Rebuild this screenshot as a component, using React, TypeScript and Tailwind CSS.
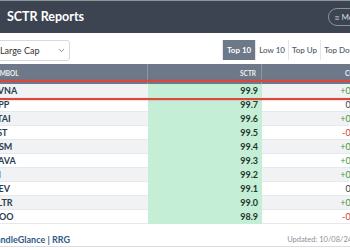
import React from 'react';
import { TrendingUp, ChevronDown } from 'lucide-react';

// top 10 large cap SCTR rows
const rows = [
  { sym: 'AVNA', sctr: '99.9', chg: '+0.3' },
  { sym: 'APP', sctr: '99.7', chg: '0.0' },
  { sym: 'STAI', sctr: '99.6', chg: '+0.1' },
  { sym: 'EST', sctr: '99.5', chg: '-0.2' },
  { sym: 'NSM', sctr: '99.4', chg: '+0.4' },
  { sym: 'CAVA', sctr: '99.3', chg: '+0.2' },
  { sym: 'VI', sctr: '99.2', chg: '+0.1' },
  { sym: 'GEV', sctr: '99.1', chg: '0.0' },
  { sym: 'PLTR', sctr: '99.0', chg: '+0.3' },
  { sym: 'HOO', sctr: '98.9', chg: '-0.1' },
];

const tabs = ['Top 10', 'Low 10', 'Top Up', 'Top Down'];

const chgColor = (c: string) =>
  c.startsWith('+') ? 'text-[#3b9a4f]' : c.startsWith('-') ? 'text-[#d23b3b]' : 'text-[#2d3e50]';

const App = () => {
  return (
    <div className="relative w-[350px] h-[250px] overflow-hidden bg-white font-['Lato','Liberation_Sans',sans-serif]">
      <div className="w-[420px] -ml-[16px] flex flex-col">
        {/* title bar */}
        <header className="h-[33px] bg-[#3d4451] border-t border-[#8e949c] flex items-center pr-[36px]">
          <TrendingUp className="-ml-[7px] w-[14px] h-[14px] text-white shrink-0" strokeWidth={2.5} />
          <h1 className="ml-[16px] text-[12.5px] font-bold text-white leading-none">SCTR Reports</h1>
          <button className="ml-auto h-[18px] px-[5px] rounded-full border border-[#8c929b] flex items-center gap-[2px] text-[8px] text-[#d9dce1]">
            <span className="text-[9px] leading-none">≡</span>
            <span>Menu</span>
          </button>
        </header>

        {/* controls */}
        <div className="mt-[7px] flex items-start">
          <div className="ml-[8px] w-[78px] h-[21px] border border-[#d6dae0] rounded-[3px] flex items-center justify-between pl-[7px] pr-[3px] text-[9px] text-[#333]">
            <span>Large Cap</span>
            <ChevronDown className="w-[9px] h-[9px] text-[#666]" strokeWidth={2} />
          </div>
          <div className="ml-[152px] flex h-[20px] text-[8px] whitespace-nowrap">
            {tabs.map((t, i) => (
              <div
                key={t}
                className={`flex items-center border-l border-[#e3e6ea] ${
                  i === 0 ? 'px-[4px] bg-[#6d7888] text-white font-bold' : 'px-[3px] text-[#4f5764] font-medium'
                }`}
              >
                {t}
              </div>
            ))}
          </div>
        </div>

        {/* table */}
        <div className="mt-[3px] text-[9px]">
          <div className="grid grid-cols-[164px_114px_142px] h-[20px] bg-[#6d7888] text-[6.5px] font-bold uppercase text-[#eef0f3]">
            <div className="flex items-center pl-[8px] border-r border-[#8d97a5]">Symbol</div>
            <div className="flex items-center justify-end pr-[5px] border-r border-[#8d97a5]">SCTR</div>
            <div className="flex items-center justify-end pr-[45px]">Chg</div>
          </div>
          {rows.map((r, i) => (
            <div
              key={r.sym}
              className={`grid grid-cols-[164px_114px_142px] h-[14px] border-b border-[#e6e8eb] ${
                i % 2 === 0 ? 'bg-[#f1f2f4]' : 'bg-white'
              }`}
            >
              <div className="flex items-center pl-[8px] font-bold text-[#2d3e50]">{r.sym}</div>
              <div className="flex items-center justify-end pr-[4px] bg-[#c4eed5] font-bold text-[#24362c]">{r.sctr}</div>
              <div className={`flex items-center justify-end pr-[46px] ${chgColor(r.chg)}`}>{r.chg}</div>
            </div>
          ))}
        </div>

        {/* footer */}
        <div className="h-[23px] pt-[10px] flex items-start border-b border-[#d9dce1]">
          <span className="ml-[6px] text-[9px] font-bold text-[#2f5a86] leading-[12px]">CandleGlance | RRG</span>
          <span className="ml-auto mr-[20px] text-[7.5px] text-[#8a9099] leading-[12px]">Updated: 10/08/24 16:05 ET</span>
        </div>
      </div>

      {/* highlight annotation over first row */}
      <div className="absolute left-[-10px] top-[80px] w-[370px] h-[20px] border-2 border-[#d9483f] rounded-[4px] shadow-[0_0_2px_rgba(217,72,63,0.6)] pointer-events-none" />
    </div>
  );
};

export default App;
